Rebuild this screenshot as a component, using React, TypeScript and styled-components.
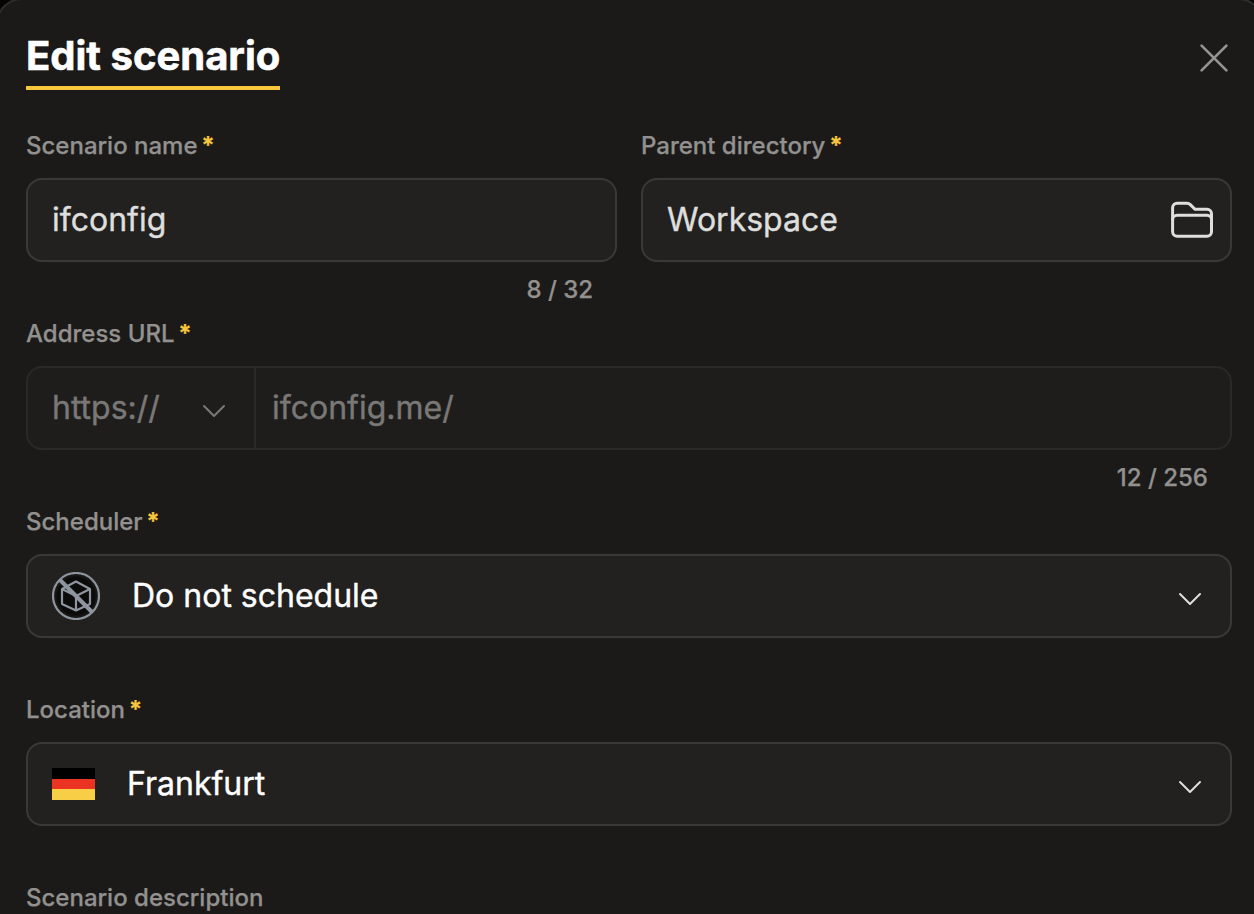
import React from 'react';
import styled, { createGlobalStyle } from 'styled-components';

const GlobalStyle = createGlobalStyle`
  * { box-sizing: border-box; }
  html, body { margin: 0; background: #050505; overflow: hidden; }
  body { font-family: Inter, "Liberation Sans", sans-serif; }
  button { font: inherit; border: 0; background: none; padding: 0; }
`;

const Viewport = styled.div`
  width: 1254px;
  height: 914px;
  overflow: hidden;
`;

const Panel = styled.main`
  width: 1268px;
  height: 960px;
  margin: -2px 0 0 -4px;
  padding: 32px 34px 0 28px;
  border: 2px solid #2d2d2c;
  border-radius: 26px;
  background: #1b1a18;
`;

const Header = styled.header`
  display: flex;
  justify-content: space-between;
  align-items: flex-start;
  height: 98px;
`;

const Title = styled.h1`
  margin: 0;
  width: 254px;
  height: 58px;
  border-bottom: 4px solid #f8c73e;
  color: #fff;
  font-size: 40px;
  font-weight: 700;
  line-height: 48px;
  -webkit-text-stroke: 0.6px currentColor;
  white-space: nowrap;
`;

const CloseButton = styled.button`
  display: flex;
  margin: 10px -2px 0 0;
`;

const Form = styled.form`
  display: grid;
  grid-template-columns: 591px 591px;
  column-gap: 24px;
`;

const Field = styled.div<{ $wide?: boolean }>`
  grid-column: ${({ $wide }) => ($wide ? '1 / -1' : 'auto')};
  height: 188px;
  display: flex;
  flex-direction: column;
`;

const Label = styled.label`
  height: 48px;
  color: #92918f;
  font-size: 24px;
  font-weight: 500;
  line-height: 32px;
  -webkit-text-stroke: 0.25px currentColor;
`;

const Required = styled.span`
  margin-left: 4px;
  color: #f8c73e;
  font-weight: 600;
  -webkit-text-stroke: 0.25px currentColor;
`;

const Control = styled.div<{ $disabled?: boolean }>`
  display: flex;
  align-items: center;
  flex: none;
  height: 84px;
  padding: 0 24px;
  border: 2px solid ${({ $disabled }) => ($disabled ? '#2a2928' : '#3a3938')};
  border-radius: 16px;
  background: ${({ $disabled }) => ($disabled ? '#1e1d1b' : '#22211f')};
`;

const Value = styled.span<{ $tone: 'input' | 'select' | 'disabled' }>`
  flex: 1;
  color: ${({ $tone }) => ({ input: '#dededd', select: '#fff', disabled: '#797877' })[$tone]};
  font-size: 32px;
  line-height: 40px;
  -webkit-text-stroke: 0.4px currentColor;
  white-space: nowrap;
`;

const Protocol = styled.div`
  display: flex;
  align-items: center;
  width: 204px;
  height: 80px;
  padding-right: 24px;
  margin-right: 16px;
  border-right: 2px solid #2a2928;
`;

const Counter = styled.div`
  padding: 12px 24px 0 0;
  color: #92918f;
  font-size: 24px;
  font-weight: 500;
  line-height: 32px;
  -webkit-text-stroke: 0.25px currentColor;
  text-align: right;
`;

const FolderSlot = styled.span`
  display: flex;
  margin-right: -8px;
`;

const ArrowSlot = styled.span`
  display: flex;
  margin: 6px 4px 0 0;
`;

const Leading = styled.span`
  display: flex;
  flex: none;
  margin-right: 32px;
`;

const Flag = styled.span`
  display: grid;
  grid-template-rows: repeat(3, 1fr);
  width: 43px;
  height: 32px;
`;

const Stripe = styled.span<{ $color: string }>`
  background: ${({ $color }) => $color};
`;

const Chevron = ({ color }: { color: string }) => (
  <svg width="24" height="14" viewBox="0 0 24 14" fill="none">
    <path d="M2 2 12 12 22 2" stroke={color} strokeWidth="2" strokeLinecap="round" strokeLinejoin="round" />
  </svg>
);

const CloseIcon = () => (
  <svg width="32" height="32" viewBox="0 0 32 32" fill="none">
    <path d="M3.6 3.6 28.4 28.4M28.4 3.6 3.6 28.4" stroke="#959493" strokeWidth="2.7" strokeLinecap="round" />
  </svg>
);

const FolderIcon = () => (
  <svg width="44" height="38" viewBox="0 0 44 38" fill="none" stroke="#dededd" strokeWidth="3">
    <path d="M2.6 19V6.7a4.5 4.5 0 0 1 4.5-4.5H17c1.5 0 2.3.4 3.3 1.4L25 8.3h12a4.5 4.5 0 0 1 4.5 4.5V19" />
    <rect x="2.6" y="14.3" width="38.9" height="21" rx="4.5" />
  </svg>
);

const NoScheduleIcon = () => (
  <svg width="48" height="48" viewBox="0 0 48 48" fill="none" stroke="#8e959f">
    <defs>
      <radialGradient id="disc">
        <stop offset="0.8" stopColor="#0b0b0a" />
        <stop offset="1" stopColor="#222221" />
      </radialGradient>
    </defs>
    <circle cx="24" cy="24" r="23" fill="url(#disc)" strokeWidth="2.2" />
    <path d="M24 9.5 38 17v15L24 38.5 10 32V17ZM10 17l14 7 14-7M24 24v14.5" strokeWidth="2.2" strokeLinejoin="round" />
    <path d="M7.5 7.5 40.5 40.5" strokeWidth="4" />
  </svg>
);

const FieldLabel = ({ text, required = true }: { text: string; required?: boolean }) => (
  <Label>
    {text}
    {required && <Required>*</Required>}
  </Label>
);

export default function App() {
  return (
    <Viewport>
      <GlobalStyle />
      <Panel>
        <Header>
          <Title>Edit scenario</Title>
          <CloseButton aria-label="Close"><CloseIcon /></CloseButton>
        </Header>
        <Form>
          <Field>
            <FieldLabel text="Scenario name" />
            <Control><Value $tone="input">ifconfig</Value></Control>
            <Counter>8 / 32</Counter>
          </Field>
          <Field>
            <FieldLabel text="Parent directory" />
            <Control>
              <Value $tone="input">Workspace</Value>
              <FolderSlot><FolderIcon /></FolderSlot>
            </Control>
          </Field>
          <Field $wide>
            <FieldLabel text="Address URL" />
            <Control $disabled>
              <Protocol>
                <Value $tone="disabled">https://</Value>
                <ArrowSlot><Chevron color="#797877" /></ArrowSlot>
              </Protocol>
              <Value $tone="disabled">ifconfig.me/</Value>
            </Control>
            <Counter>12 / 256</Counter>
          </Field>
          <Field $wide>
            <FieldLabel text="Scheduler" />
            <Control>
              <Leading><NoScheduleIcon /></Leading>
              <Value $tone="select">Do not schedule</Value>
              <ArrowSlot><Chevron color="#dededd" /></ArrowSlot>
            </Control>
          </Field>
          <Field $wide>
            <FieldLabel text="Location" />
            <Control>
              <Leading>
                <Flag>
                  <Stripe $color="#000" />
                  <Stripe $color="#ea3323" />
                  <Stripe $color="#f7ce46" />
                </Flag>
              </Leading>
              <Value $tone="select">Frankfurt</Value>
              <ArrowSlot><Chevron color="#dededd" /></ArrowSlot>
            </Control>
          </Field>
          <Field $wide>
            <FieldLabel text="Scenario description" required={false} />
          </Field>
        </Form>
      </Panel>
    </Viewport>
  );
}
